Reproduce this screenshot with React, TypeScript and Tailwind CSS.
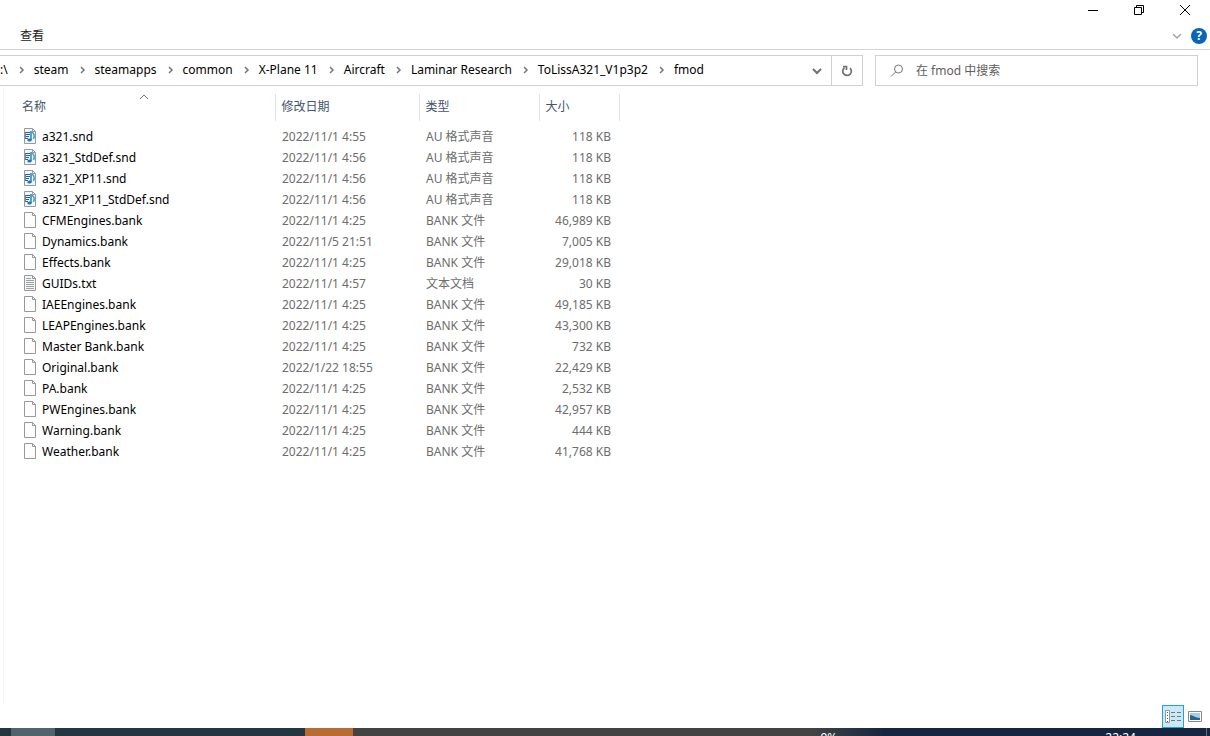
import React, { useState } from 'react';

type FileKind = 'sound' | 'blank' | 'text';

interface FileEntry {
  name: string;
  date: string;
  type: string;
  size: string;
  kind: FileKind;
}

const files: FileEntry[] = [
  { name: 'a321.snd', date: '2022/11/1 4:55', type: 'AU 格式声音', size: '118 KB', kind: 'sound' },
  { name: 'a321_StdDef.snd', date: '2022/11/1 4:56', type: 'AU 格式声音', size: '118 KB', kind: 'sound' },
  { name: 'a321_XP11.snd', date: '2022/11/1 4:56', type: 'AU 格式声音', size: '118 KB', kind: 'sound' },
  { name: 'a321_XP11_StdDef.snd', date: '2022/11/1 4:56', type: 'AU 格式声音', size: '118 KB', kind: 'sound' },
  { name: 'CFMEngines.bank', date: '2022/11/1 4:25', type: 'BANK 文件', size: '46,989 KB', kind: 'blank' },
  { name: 'Dynamics.bank', date: '2022/11/5 21:51', type: 'BANK 文件', size: '7,005 KB', kind: 'blank' },
  { name: 'Effects.bank', date: '2022/11/1 4:25', type: 'BANK 文件', size: '29,018 KB', kind: 'blank' },
  { name: 'GUIDs.txt', date: '2022/11/1 4:57', type: '文本文档', size: '30 KB', kind: 'text' },
  { name: 'IAEEngines.bank', date: '2022/11/1 4:25', type: 'BANK 文件', size: '49,185 KB', kind: 'blank' },
  { name: 'LEAPEngines.bank', date: '2022/11/1 4:25', type: 'BANK 文件', size: '43,300 KB', kind: 'blank' },
  { name: 'Master Bank.bank', date: '2022/11/1 4:25', type: 'BANK 文件', size: '732 KB', kind: 'blank' },
  { name: 'Original.bank', date: '2022/1/22 18:55', type: 'BANK 文件', size: '22,429 KB', kind: 'blank' },
  { name: 'PA.bank', date: '2022/11/1 4:25', type: 'BANK 文件', size: '2,532 KB', kind: 'blank' },
  { name: 'PWEngines.bank', date: '2022/11/1 4:25', type: 'BANK 文件', size: '42,957 KB', kind: 'blank' },
  { name: 'Warning.bank', date: '2022/11/1 4:25', type: 'BANK 文件', size: '444 KB', kind: 'blank' },
  { name: 'Weather.bank', date: '2022/11/1 4:25', type: 'BANK 文件', size: '41,768 KB', kind: 'blank' },
];

const crumbs = ['steam', 'steamapps', 'common', 'X-Plane 11', 'Aircraft', 'Laminar Research', 'ToLissA321_V1p3p2', 'fmod'];

const Chevron: React.FC = () => (
  <svg className="h-2 w-[26px] shrink-0" viewBox="0 0 26 8" fill="none" stroke="#777" strokeWidth="1.5" aria-hidden="true">
    <path d="M12 1l3 3-3 3" />
  </svg>
);

const FileIcon: React.FC<{ kind: FileKind }> = ({ kind }) => (
  <svg className="h-[17px] w-4 shrink-0" viewBox="0 0 16 17" fill="none" aria-hidden="true">
    <path d="M2.5 .5h8l3 3v12h-11z" fill={kind === 'blank' ? '#fdfdfd' : '#f3f6f8'} stroke="#999" />
    <path d="M10.5 .5v3h3" stroke="#999" />
    {kind === 'text' && <path d="M4 3.500h5M4 5.500h8M4 7.500h8M4 9.500h8M4 11.500h8M4 13.500h8" stroke="#a0a0a0" />}
    {kind === 'sound' && (
      <>
        <path d="M3 4.500h5M3 6.500h5M3 8.500h4M3 10.500h3" stroke="#2b5f93" />
        <path d="M3.500 4.500v6" stroke="#5b8fbd" />
        <path d="M9 3v9" stroke="#1f84c6" strokeWidth="1.5" />
        <path d="M9.500 4c2.500 1 3.500 3.500 2 7" stroke="#3aa0dc" strokeWidth="1.5" />
        <ellipse cx="7.500" cy="12" rx="2.200" ry="1.600" fill="#1c75b5" />
      </>
    )}
  </svg>
);

const App: React.FC = () => {
  const [query, setQuery] = useState('');

  return (
    <div className="flex min-h-screen flex-col bg-white font-['Noto_Sans','Noto_Sans_CJK_SC',sans-serif] text-xs text-black">
      <header>
        <div className="flex h-5 justify-end pr-0.5">
          <button type="button" aria-label="最小化" className="flex w-[46px] items-center justify-center">
            <svg className="h-3 w-3" viewBox="0 0 12 12" stroke="currentColor"><path d="M1 6.5h10" /></svg>
          </button>
          <button type="button" aria-label="还原" className="flex w-[46px] items-center justify-center">
            <svg className="h-3 w-3" viewBox="0 0 12 12" fill="none" stroke="currentColor"><path d="M1.5 3.5h7v7h-7zM3.5 3.500v-2h7v7h-2" /></svg>
          </button>
          <button type="button" aria-label="关闭" className="flex w-[46px] items-center justify-center">
            <svg className="h-3 w-3" viewBox="0 0 12 12" stroke="currentColor"><path d="M1 1l10 10M11 1L1 11" /></svg>
          </button>
        </div>
        <div className="flex h-[30px] items-center justify-between border-b border-[#d5d5d5] pt-0.5 pr-[3px] pl-5">
          <button type="button" className="text-[#222]">查看</button>
          <div className="flex items-center gap-2">
            <button type="button" aria-label="展开功能区">
              <svg className="h-3 w-3" viewBox="0 0 12 12" fill="none" stroke="#a0a0a0" strokeWidth="1.3"><path d="M2 4l4 4 4-4" /></svg>
            </button>
            <button type="button" aria-label="帮助" className="flex h-4 w-4 items-center justify-center rounded-full bg-[#0a64b8] text-xs font-bold text-white">?</button>
          </div>
        </div>
      </header>

      <div className="mt-[5px] flex h-[31px] gap-3 pr-3">
        <nav aria-label="地址" className="flex min-w-0 flex-1 items-center border border-l-0 border-[#d0d0d0]">
          <div className="flex items-center pb-0.5">
            <a href="#root">:\</a>
            {crumbs.map(crumb => (
              <React.Fragment key={crumb}>
                <Chevron />
                <a href={`#${crumb}`} className="whitespace-nowrap">{crumb}</a>
              </React.Fragment>
            ))}
          </div>
          <button type="button" aria-label="以前的位置" className="ml-auto flex h-full w-7 items-center justify-center">
            <svg className="h-3 w-3" viewBox="0 0 12 12" fill="none" stroke="#707070" strokeWidth="2"><path d="M2 4l4 4 4-4" /></svg>
          </button>
          <button type="button" aria-label="刷新" className="flex h-full w-[31px] items-center justify-center border-l border-[#d0d0d0]">
            <svg className="h-3 w-3" viewBox="0 0 12 12" fill="none" stroke="#707070" strokeWidth="1.7">
              <path d="M9 3a4.300 4.300 0 1 1-5.500-.3M2 1.500h3.500V5" />
            </svg>
          </button>
        </nav>
        <label className="flex w-[323px] items-center gap-3 border border-[#d0d0d0] pl-3.5">
          <svg className="h-3.5 w-3.5 shrink-0" viewBox="0 0 14 14" fill="none" stroke="#777"><circle cx="8.5" cy="5" r="4" /><path d="M5.5 8L1 12.5" /></svg>
          <input
            type="text"
            aria-label="在 fmod 中搜索"
            placeholder="在 fmod 中搜索"
            value={query}
            onChange={e => setQuery(e.target.value)}
            className="min-w-0 flex-1 outline-none placeholder:text-[#606060]"
          />
        </label>
      </div>

      <main className="ml-[3px] flex-1 border-l border-[#f5f5f5] pt-2">
        <table className="w-[615px] table-fixed border-collapse text-left">
          <colgroup>
            <col className="w-[271px]" />
            <col className="w-36" />
            <col className="w-[120px]" />
            <col className="w-20" />
          </colgroup>
          <thead className="text-[#44546a]">
            <tr className="h-[27px]">
              <th className="relative border-r border-[#e2e2e2] p-0 pb-0.5 pl-[18px] font-normal">
                名称
                <svg className="absolute top-0 left-1/2 h-1.5 w-2.5" viewBox="0 0 10 6" fill="none" stroke="#777"><path d="M1 5l4-4 4 4" /></svg>
              </th>
              <th className="border-r border-[#e2e2e2] p-0 pb-0.5 pl-1.5 font-normal">修改日期</th>
              <th className="border-r border-[#e2e2e2] p-0 pb-0.5 pl-1.5 font-normal">类型</th>
              <th className="border-r border-[#e2e2e2] p-0 pb-0.5 pl-1.5 font-normal">大小</th>
            </tr>
          </thead>
          <tbody className="text-[#6d6d6d] before:block before:h-[5px]">
            {files.map(file => (
              <tr key={file.name} className="h-[21px]">
                <td className="p-0 pl-[18px]">
                  <div className="flex items-center gap-1 whitespace-nowrap text-black">
                    <FileIcon kind={file.kind} />
                    {file.name}
                  </div>
                </td>
                <td className="p-0 pl-[7px]">{file.date}</td>
                <td className="p-0 pl-[7px]">{file.type}</td>
                <td className="p-0 pr-2 text-right">{file.size}</td>
              </tr>
            ))}
          </tbody>
        </table>
      </main>

      <div className="flex items-center justify-end pr-1">
        <button type="button" aria-label="详细信息" className="flex h-[23px] w-[22px] items-center justify-center border border-[#26a0da] bg-[#cbe8f6]">
          <svg className="h-4 w-4" viewBox="0 0 16 16" fill="none">
            <path d="M.5 1.500h4v12h-4z" fill="#fff" stroke="#999" />
            <path d="M2 3.500h1M2 6.500h1M2 9.500h1M2 12.500h1" stroke="#555" />
            <path d="M6 3.500h4M12 3.500h4M6 7.500h4M12 7.500h4M6 11.500h4M12 11.500h4" stroke="#777" />
          </svg>
        </button>
        <button type="button" aria-label="大缩略图" className="flex h-[23px] w-[22px] items-center justify-center">
          <svg className="h-3 w-3.5" viewBox="0 0 14 12" fill="none">
            <path d="M.5 .5h13v10H.5z" fill="#fff" stroke="#8a8a8a" />
            <path d="M2 2h10v7H2z" fill="#9fd0ee" />
            <path d="M2 4c3 0 5 3 10 3v2H2z" fill="#2c6287" />
          </svg>
        </button>
      </div>

      <footer className="flex h-2 overflow-hidden bg-linear-to-r from-[#434343] from-67% to-[#172640] to-73% text-white">
        <div className="flex w-[305px] bg-[#233743]">
          <div className="ml-[11px] w-11 bg-[#51636e]" />
        </div>
        <div className="w-12 bg-[#b96b31]" />
        <div className="ml-auto flex gap-[268px] pr-[70px] leading-5">
          <span>9%</span>
          <span>22:24</span>
        </div>
        <div className="w-1 border-l border-[#66707f]" />
      </footer>
    </div>
  );
};

export default App;
